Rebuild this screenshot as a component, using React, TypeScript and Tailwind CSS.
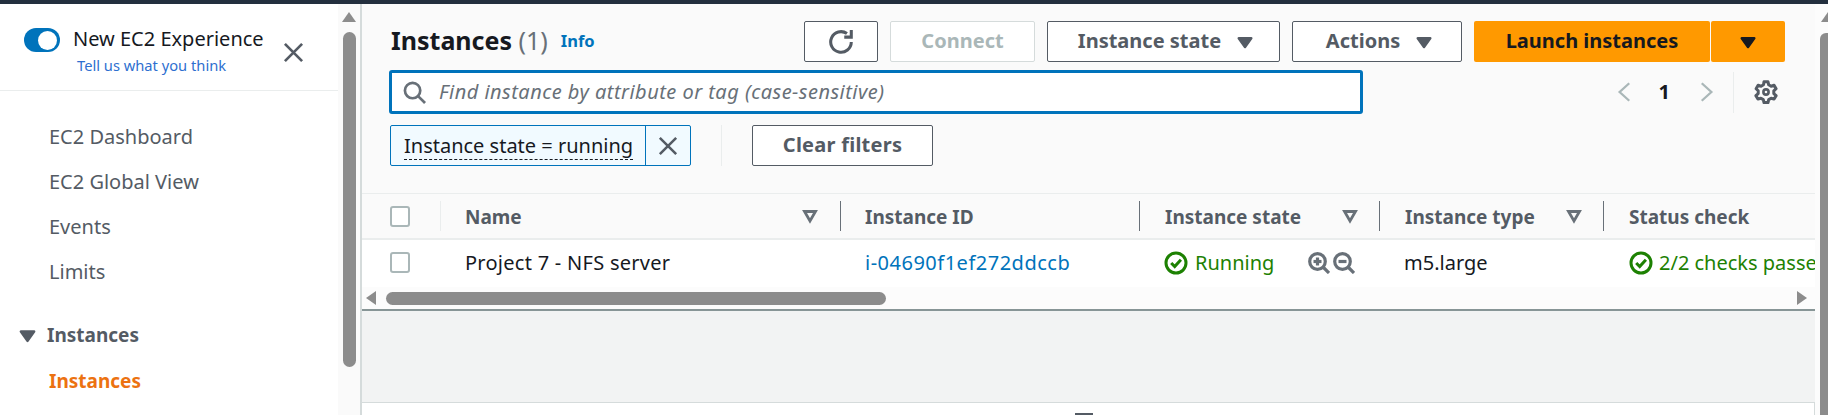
import React from "react";

const Caret = ({ className = "" }: { className?: string }) => (
  <svg viewBox="0 0 16 16" className={className} fill="currentColor" stroke="currentColor" strokeWidth="2" strokeLinejoin="round">
    <path d="M3 5h10l-5 7z" />
  </svg>
);

const Filter = () => (
  <svg viewBox="0 0 16 16" className="w-[16px] h-[16px] text-[#687078] shrink-0" fill="none" stroke="currentColor" strokeWidth="2.8">
    <path d="M2.5 3.5h11L8 13z" />
  </svg>
);

const XIcon = ({ className = "" }: { className?: string }) => (
  <svg viewBox="0 0 22 22" className={className} fill="none" stroke="currentColor" strokeWidth="2.8">
    <path d="M2 2l18 18M20 2L2 20" />
  </svg>
);

const Ok = () => (
  <svg viewBox="0 0 24 24" className="w-[24px] h-[24px] text-[#1d8102] shrink-0" fill="none" stroke="currentColor" strokeWidth="3">
    <circle cx="12" cy="12" r="10" />
    <path d="M7.2 12l3.5 3.6 6.2-6.8" />
  </svg>
);

const Magnifier = ({ plus }: { plus?: boolean }) => (
  <svg viewBox="0 0 22 22" className="w-[22px] h-[22px] text-[#687078] shrink-0" fill="none" stroke="currentColor" strokeWidth="3.2">
    <circle cx="9.5" cy="9.5" r="7.8" />
    <path d="M15 15l6 6" />
    <path d="M5.5 9.5h8" />
    {plus && <path d="M9.5 5.5v8" />}
  </svg>
);

const Btn = ({ w, children, disabled }: { w: string; children: React.ReactNode; disabled?: boolean }) => (
  <div
    className={`${w} h-[41px] shrink-0 rounded-[2px] border flex items-center justify-center font-bold text-[20px] ${
      disabled ? "border-[#d5dbdb] text-[#aab7b8] bg-white" : "border-[#545b64] text-[#545b64] bg-white"
    }`}
  >
    {children}
  </div>
);

const Box = () => <div className="w-[20px] h-[21px] rounded-[3px] border-2 border-[#aab7b8] bg-white shrink-0" />;

const Divider = ({ light }: { light?: boolean }) => (
  <div className={`w-px h-[30px] shrink-0 ${light ? "bg-[#eaeded]" : "bg-[#687078]"}`} />
);

const Nav = ({ children }: { children: React.ReactNode }) => (
  <div className="h-[45px] pl-[49px] flex items-center text-[#545b64] text-[20px]">{children}</div>
);

export default function App() {
  return (
    <div
      className="w-[1828px] h-[415px] overflow-hidden flex flex-col bg-white text-[#16191f]"
      style={{ fontFamily: '"Noto Sans", sans-serif' }}
    >
      <div className="h-[4px] bg-[#232f3e] shrink-0" />
      <div className="flex flex-1 min-h-0">
        <aside className="w-[338px] shrink-0 flex flex-col bg-white">
          <div className="h-[87px] shrink-0 border-b border-[#eaeded] flex pl-[24px] pt-[24px]">
            <div className="w-[36px] h-[24px] rounded-full bg-[#0073bb] flex items-center justify-end pr-[3px] shrink-0">
              <div className="w-[19px] h-[19px] rounded-full bg-white" />
            </div>
            <div className="ml-[13px] w-[191px] flex flex-col items-start -mt-[3px] shrink-0">
              <div className="text-[20px] leading-[28px] whitespace-nowrap">New EC2 Experience</div>
              <div className="text-[14.7px] leading-[24px] text-[#2e6fd0] whitespace-nowrap ml-[4px]">Tell us what you think</div>
            </div>
            <XIcon className="w-[21px] h-[21px] text-[#545b64] ml-[19px] mt-[14px] shrink-0" />
          </div>
          <div className="pt-[23px]">
            <Nav>EC2 Dashboard</Nav>
            <Nav>EC2 Global View</Nav>
            <Nav>Events</Nav>
            <Nav>Limits</Nav>
          </div>
          <div className="mt-[19px] h-[45px] pl-[17px] flex items-center font-bold text-[19px] text-[#545b64]">
            <Caret className="w-[21px] h-[21px] mr-[9px]" />
            Instances
          </div>
          <div className="h-[46px] pl-[49px] flex items-center font-bold text-[19px] text-[#ec7211]">Instances</div>
        </aside>

        <div className="w-[22px] shrink-0 bg-[#fafafa] flex flex-col items-center pt-[8px]">
          <div className="w-0 h-0 border-x-[7px] border-x-transparent border-b-[10px] border-b-[#8c8c8c]" />
          <div className="w-[13px] h-[335px] mt-[10px] rounded-full bg-[#8c8c8c]" />
        </div>

        <main className="w-[1455px] shrink-0 flex flex-col border-l-2 border-[#d5dbdb] bg-[#fafafa]">
          <div className="h-[190px] shrink-0 border-b border-[#eaeded] pl-[27px] pr-[30px] pt-[17px] flex flex-col">
            <div className="flex items-center h-[41px]">
              <div className="text-[25px] leading-[36px] font-bold whitespace-nowrap ml-[2px] -mt-[3px]">
                Instances <span className="font-normal text-[#687078]">(1)</span>
              </div>
              <div className="ml-[13px] text-[#0073bb] font-bold text-[16.5px]">Info</div>
              <div className="ml-auto flex items-center">
                <Btn w="w-[74px]">
                  <svg viewBox="0 0 24 24" className="w-[26px] h-[26px]" fill="none" stroke="currentColor" strokeWidth="2.8">
                    <path d="M21.5 12a9.5 9.5 0 1 1-4-7.8" />
                    <path d="M21.5 1v6.5H15" />
                  </svg>
                </Btn>
                <div className="ml-[12px]">
                  <Btn w="w-[145px]" disabled><span className="mb-[2px]">Connect</span></Btn>
                </div>
                <div className="ml-[12px]">
                  <Btn w="w-[233px]">
                    <span className="mb-[2px] ml-[6px]">Instance state</span>
                    <Caret className="w-[20px] h-[20px] ml-[14px]" />
                  </Btn>
                </div>
                <div className="ml-[12px]">
                  <Btn w="w-[170px]">
                    <span className="mb-[2px] ml-[6px]">Actions</span>
                    <Caret className="w-[20px] h-[20px] ml-[14px]" />
                  </Btn>
                </div>
                <div className="ml-[12px] w-[236px] h-[41px] rounded-[2px] bg-[#ff9900] flex items-center justify-center font-bold text-[20px]">
                  <span className="mb-[2px]">Launch instances</span>
                </div>
                <div className="ml-px w-[74px] h-[41px] rounded-[2px] bg-[#ff9900] flex items-center justify-center">
                  <Caret className="w-[20px] h-[20px] text-[#16191f]" />
                </div>
              </div>
            </div>
            <div className="flex items-center mt-[8px] h-[44px]">
              <div className="w-[974px] h-[44px] shrink-0 rounded-[3px] border-[3px] border-[#0073bb] bg-white flex items-center pl-[11px]">
                <svg viewBox="0 0 24 24" className="w-[23px] h-[23px] text-[#687078] shrink-0" fill="none" stroke="currentColor" strokeWidth="2.8">
                  <circle cx="10" cy="10" r="8" />
                  <path d="M16 16l7 7" />
                </svg>
                <span className="ml-[13px] italic text-[20px] tracking-[0.47px] text-[#687078] whitespace-nowrap">
                  Find instance by attribute or tag (case-sensitive)
                </span>
              </div>
              <div className="ml-auto flex items-center h-[41px] pr-[7px]">
                <svg viewBox="0 0 16 24" className="w-[14px] h-[24px] text-[#aab7b8]" fill="none" stroke="currentColor" strokeWidth="2.6">
                  <path d="M14 2L3 12l11 10" />
                </svg>
                <span className="ml-[28px] font-bold text-[20px]">1</span>
                <svg viewBox="0 0 16 24" className="ml-[30px] w-[14px] h-[24px] text-[#aab7b8]" fill="none" stroke="currentColor" strokeWidth="2.6">
                  <path d="M2 2l11 10L2 22" />
                </svg>
                <div className="ml-[19px] w-px h-[41px] bg-[#eaeded]" />
                <svg viewBox="0 0 24 24" className="ml-[20px] w-[24px] h-[24px] text-[#545b64]" fill="none" stroke="currentColor" strokeWidth="3" strokeLinejoin="round">
                  <path d="M10 1.8h4l.7 3 2.4 1.4 3-.9 2 3.4-2.3 2.1v2.8l2.3 2.1-2 3.4-3-.9-2.4 1.4-.7 3h-4l-.7-3-2.4-1.4-3 .9-2-3.4 2.3-2.1v-2.8L2.1 8.7l2-3.4 3 .9 2.4-1.4z" />
                  <circle cx="12" cy="12" r="2.6" strokeWidth="2.6" />
                </svg>
              </div>
            </div>
            <div className="flex items-center mt-[11px] h-[41px]">
              <div className="w-[301px] h-[41px] shrink-0 flex rounded-[2px] border border-[#0073bb] bg-[#f1faff] ml-px">
                <div className="w-[255px] border-r border-[#0073bb] flex items-center pl-[13px]">
                  <span className="text-[20px] leading-[27px] whitespace-nowrap border-b border-dashed border-[#16191f]">Instance state = running</span>
                </div>
                <div className="flex-1 flex items-center justify-center">
                  <XIcon className="w-[20px] h-[20px] text-[#545b64]" />
                </div>
              </div>
              <div className="ml-[30px] w-px h-[41px] bg-[#eaeded]" />
              <div className="ml-[30px]">
                <Btn w="w-[181px]"><span className="mb-[2px] tracking-[0.25px]">Clear filters</span></Btn>
              </div>
            </div>
          </div>

          <div className="h-[46px] shrink-0 border-b-2 border-[#eaeded] flex items-center font-bold text-[19px] text-[#545b64] whitespace-nowrap">
            <div className="w-[78px] shrink-0 pl-[28px] flex"><Box /></div>
            <div className="w-[400px] shrink-0 flex items-center pr-[22px]">
              <Divider light />
              <span className="ml-[24px] mt-[2px]">Name</span>
              <span className="ml-auto"><Filter /></span>
            </div>
            <div className="w-[299px] shrink-0 flex items-center">
              <Divider />
              <span className="ml-[24px] mt-[2px]">Instance ID</span>
            </div>
            <div className="w-[240px] shrink-0 flex items-center pr-[21px]">
              <Divider />
              <span className="ml-[25px] mt-[2px]">Instance state</span>
              <span className="ml-auto"><Filter /></span>
            </div>
            <div className="w-[224px] shrink-0 flex items-center pr-[21px]">
              <Divider />
              <span className="ml-[25px] mt-[2px]">Instance type</span>
              <span className="ml-auto"><Filter /></span>
            </div>
            <div className="flex items-center">
              <Divider />
              <span className="ml-[25px] mt-[2px]">Status check</span>
            </div>
          </div>

          <div className="h-[47px] shrink-0 bg-white flex items-center text-[20px] whitespace-nowrap overflow-hidden pb-[2px]">
            <div className="w-[78px] shrink-0 pl-[28px] flex"><Box /></div>
            <div className="w-[400px] shrink-0 pl-[25px] tracking-[0.27px]">Project 7 - NFS server</div>
            <div className="w-[299px] shrink-0 pl-[25px] text-[#0073bb] tracking-[0.5px]">i-04690f1ef272ddccb</div>
            <div className="w-[240px] shrink-0 pl-[25px] flex items-center text-[#1d8102]">
              <Ok />
              <span className="ml-[7px] w-[113px] shrink-0">Running</span>
              <div className="flex items-center gap-[3px]">
                <Magnifier plus />
                <Magnifier />
              </div>
            </div>
            <div className="w-[224px] shrink-0 pl-[25px]">m5.large</div>
            <div className="pl-[26px] flex items-center text-[#1d8102]">
              <Ok />
              <span className="ml-[6px]">2/2 checks passed</span>
            </div>
          </div>

          <div className="h-[24px] shrink-0 bg-[#fcfcfc] border-b-2 border-[#879596] flex items-center pl-[4px] pr-[8px]">
            <div className="w-0 h-0 border-y-[7px] border-y-transparent border-r-[10px] border-r-[#8c8c8c]" />
            <div className="ml-[10px] w-[500px] h-[13px] rounded-full bg-[#8c8c8c]" />
            <div className="ml-auto w-0 h-0 border-y-[7px] border-y-transparent border-l-[10px] border-l-[#8c8c8c]" />
          </div>

          <div className="h-[91px] shrink-0 bg-[#f2f3f3]" />

          <div className="flex-1 bg-white border-t border-r border-[#d5dbdb] flex justify-center items-end pr-[9px]">
            <div className="w-[18px] h-[2px] bg-[#545b64]" />
          </div>
        </main>

        <div className="flex-1 bg-[#fcfcfc] flex justify-end">
          <div className="w-[8px] flex flex-col items-end pt-[8px]">
            <div className="w-0 h-0 border-l-[7px] border-l-transparent border-b-[10px] border-b-[#8c8c8c]" />
            <div className="w-[8px] flex-1 mt-[11px] rounded-tl-[6px] bg-[#8c8c8c]" />
          </div>
        </div>
      </div>
    </div>
  );
}
